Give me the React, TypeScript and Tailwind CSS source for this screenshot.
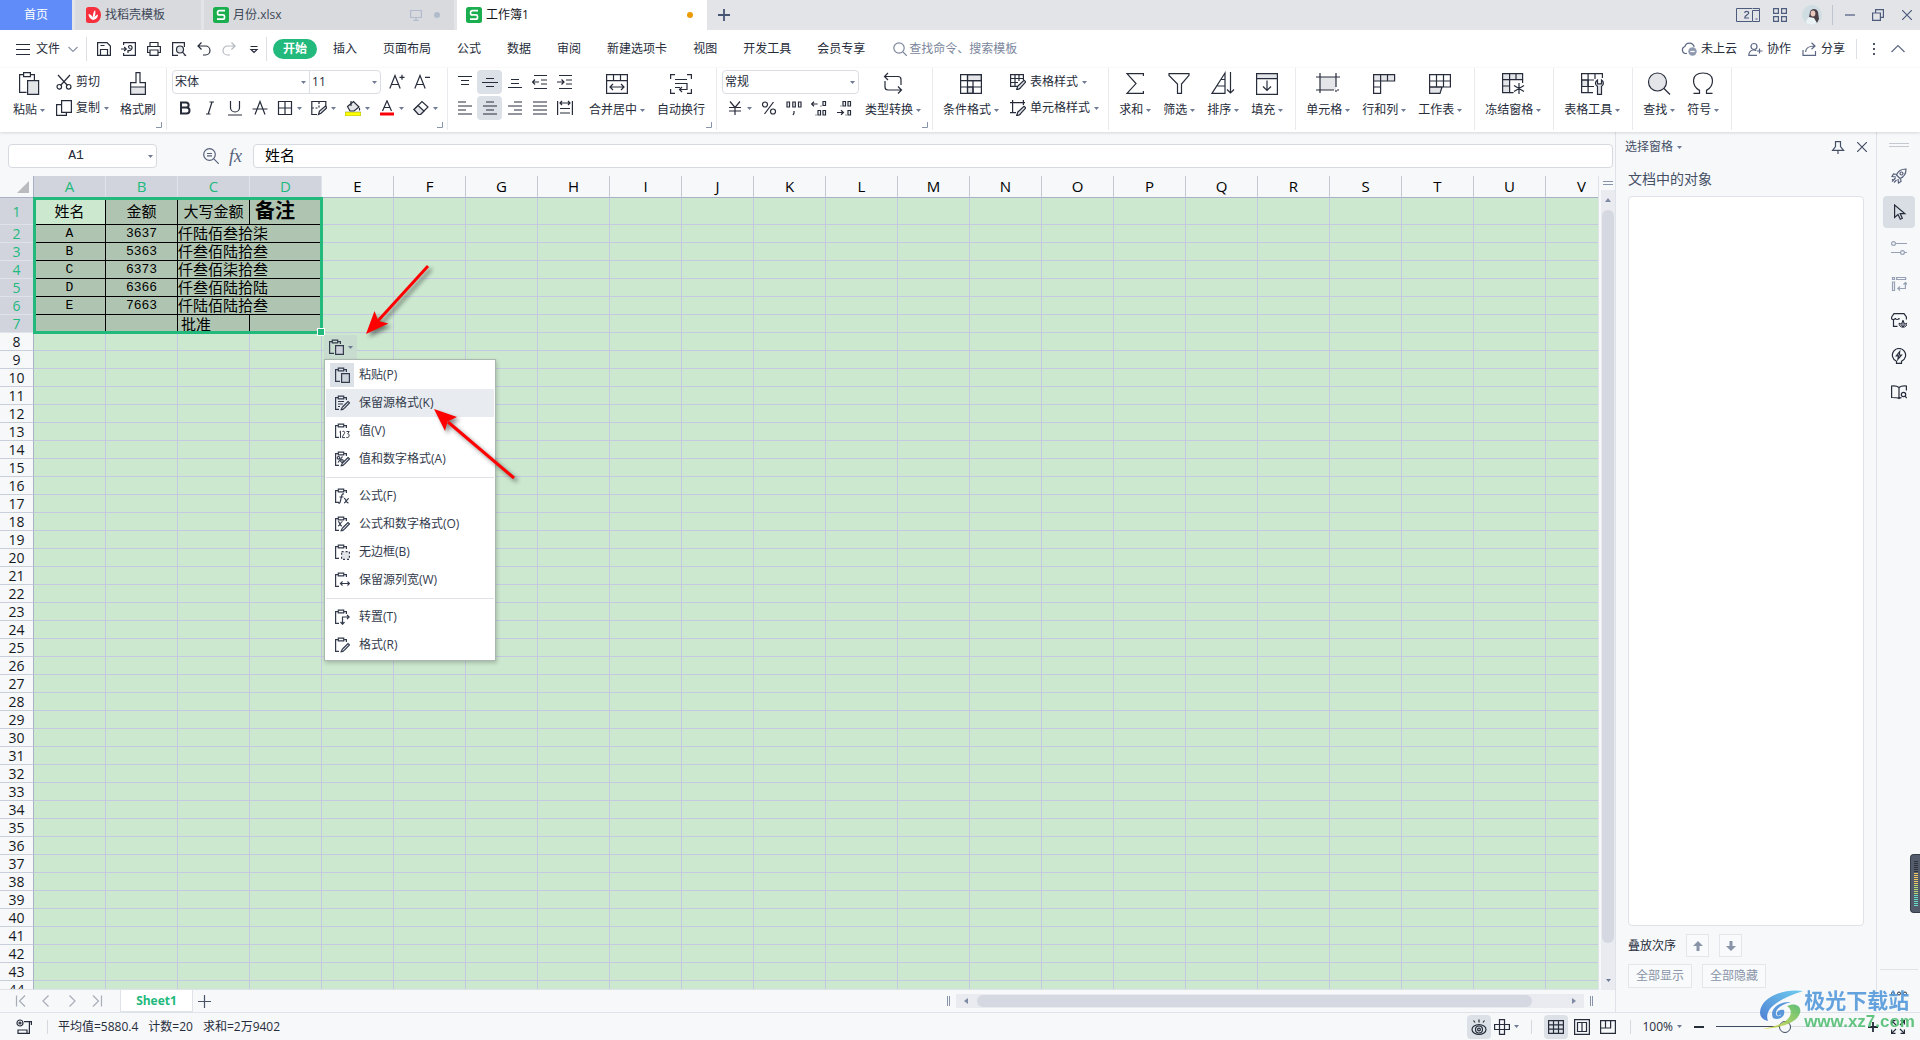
import type { ReactNode } from 'react';

const TABS = ['插入', '页面布局', '公式', '数据', '审阅', '新建选项卡', '视图', '开发工具', '会员专享'];
const COLUMNS = 'ABCDEFGHIJKLMNOPQRSTUV'.split('');
const ROWS = Array.from({ length: 44 }, (_, i) => i + 1);
const PEOPLE = [
    ['A', '3637', '仟陆佰叁拾柒'],
    ['B', '5363', '仟叁佰陆拾叁'],
    ['C', '6373', '仟叁佰柒拾叁'],
    ['D', '6366', '仟叁佰陆拾陆'],
    ['E', '7663', '仟陆佰陆拾叁'],
];

type IconProps = { size?: number; children: ReactNode; className?: string };

function Icon({ size = 16, children, className = '' }: IconProps) {
    return (
        <svg
            width={size}
            height={size}
            viewBox={`0 0 ${size} ${size}`}
            fill="none"
            stroke="currentColor"
            strokeWidth="1.2"
            className={`shrink-0 ${className}`}
            aria-hidden="true"
        >
            {children}
        </svg>
    );
}

function Caret() {
    return (
        <svg width="5" height="3" viewBox="0 0 5 3" className="shrink-0" aria-hidden="true">
            <path d="M0 0h5L2.500 3z" fill="#6f7b95" />
        </svg>
    );
}

function Launcher() {
    return (
        <svg width="6" height="6" viewBox="0 0 6 6" className="absolute right-1 bottom-0.5" aria-hidden="true">
            <path d="M5.5 0v5.5H0" fill="none" stroke="#8a94a8" />
        </svg>
    );
}

function Group({ children, className }: { children: ReactNode; className: string }) {
    return <div className={`relative flex h-[62px] shrink-0 border-r border-[#e8eaed] ${className}`}>{children}</div>;
}

function BigButton({ label, icon, caret = true }: { label: string; icon: ReactNode; caret?: boolean }) {
    return (
        <button type="button" className="flex shrink-0 flex-col items-center gap-[7px] pt-[3px] whitespace-nowrap">
            <Icon size={24}>{icon}</Icon>
            <span className="flex items-center gap-[3px] leading-4">
                {label}
                {caret && <Caret />}
            </span>
        </button>
    );
}

function SmallButton({ label, icon, caret = true }: { label: string; icon: ReactNode; caret?: boolean }) {
    return (
        <button type="button" className="flex h-6 items-center gap-1 whitespace-nowrap">
            <Icon>{icon}</Icon>
            {label}
            {caret && <Caret />}
        </button>
    );
}

function Tool({ name, children, active = false }: { name: string; children: ReactNode; active?: boolean }) {
    return (
        <button
            type="button"
            aria-label={name}
            className={`flex h-6 w-[25px] items-center justify-center rounded-sm ${active ? 'bg-[#dce1e7]' : ''}`}
        >
            <Icon>{children}</Icon>
        </button>
    );
}

function DropTool({ name, children }: { name: string; children: ReactNode }) {
    return (
        <button type="button" aria-label={name} className="flex h-6 w-[34px] items-center justify-center gap-1">
            <Icon>{children}</Icon>
            <Caret />
        </button>
    );
}

function Dropdown({ label, value, className }: { label: string; value: string; className: string }) {
    return (
        <div className={`relative h-6 border border-[#dadde3] bg-white ${className}`}>
            <select aria-label={label} className="h-full w-full appearance-none bg-transparent pl-0.5 outline-none">
                <option>{value}</option>
            </select>
            <span className="pointer-events-none absolute top-2.5 right-[3px] flex">
                <Caret />
            </span>
        </div>
    );
}

const wpsMark = (
    <svg width="16" height="16" viewBox="0 0 16 16" className="shrink-0" aria-hidden="true">
        <rect width="16" height="16" rx="2.5" fill="#1aae4f" />
        <path d="M12 3.7H6.2a1.6 1.6 0 0 0-1.6 1.6v.9c0 1 .7 1.7 1.6 1.7h3.7c.9 0 1.6.7 1.6 1.6v.9c0 1-.7 1.7-1.6 1.7H4" fill="none" stroke="#fff" strokeWidth="1.7" />
    </svg>
);

function TitleBar() {
    return (
        <header className="flex h-[30px] shrink-0 items-stretch bg-[#e2e4e8]">
            <button type="button" className="w-[72px] bg-[#608cfa] text-white">首页</button>
            <button type="button" className="ml-[3px] flex w-[126px] items-center gap-1 bg-[#d8dade] pl-[11px] text-[#3d4757]">
                <svg width="15" height="16" viewBox="0 0 15 16" aria-hidden="true">
                    <path d="M2.5 0H8a7 8 0 0 1 0 16H2.5A2.5 2.5 0 0 1 0 13.500V2.500A2.500 2.500 0 0 1 2.500 0z" fill="#f6303c" />
                    <path d="M7 13c-3-1-4.500-3.500-4.500-6C5 7.500 6.500 9 7 11c-.3-3 .2-6 2-8 1 2.500.3 5.500-1 8 .9-2 2.200-3 4-3.500C12 10.500 10 12.500 7 13z" fill="#fff" />
                </svg>
                找稻壳模板
            </button>
            <button type="button" className="ml-[3px] flex w-[250px] items-center gap-1 bg-[#d8dade] pl-[9px] text-[#3d4757]">
                {wpsMark}
                月份.xlsx
                <span className="ml-auto flex items-center gap-3 pr-3.5 text-[#b1bbcb]">
                    <Icon size={12}>
                        <path d="M.6 1.500h10.800v7H.6zM6 8.500v3M3.500 11.400h5" />
                    </Icon>
                    <span className="size-1.5 rounded-full bg-[#b1bbcb]" />
                </span>
            </button>
            <button type="button" className="ml-[3px] flex w-[250px] items-center gap-1 bg-white pl-[9px] text-[#15181d]">
                {wpsMark}
                工作簿1
                <span className="mr-3.5 ml-auto size-1.5 rounded-full bg-[#ec9a05]" />
            </button>
            <button type="button" aria-label="新建标签" className="flex w-[34px] items-center justify-center text-[#465373]">
                <Icon size={12}>
                    <path d="M6 0v12M0 6h12" strokeWidth="1.800" />
                </Icon>
            </button>
            <div className="ml-auto flex items-center text-[#4d5b7c]">
                <button type="button" aria-label="双屏" className="mr-[13px]">
                    <svg width="24" height="14" viewBox="0 0 24 14" fill="none" stroke="currentColor" aria-hidden="true">
                        <path d="M16 13.500H.5V.5H16M16.500 2.500h7v11h-7zM19.500 11h2M16.500.5h7v2" />
                        <path d="M8.700 5c0-2.200 4-2.200 4 0 0 1.500-4 2.500-4 5h4.300" strokeWidth="1.200" />
                    </svg>
                </button>
                <button type="button" aria-label="应用" className="mr-[15px]">
                    <Icon size={14}>
                        <path d="M.6.6h4.800v4.800H.6zM8.600.6h4.800v4.800H8.600zM.6 8.600h4.800v4.800H.6zM8.600 8.600h4.800v4.800H8.600z" />
                    </Icon>
                </button>
                <button type="button" aria-label="账户" className="mr-2.5">
                    <svg width="20" height="20" viewBox="0 0 20 20" aria-hidden="true">
                        <circle cx="10" cy="10" r="10" fill="#cfdde2" />
                        <path d="M4 18c0-4 3-6 6-7l4 1 1 6a10 10 0 0 1-11 0z" fill="#e9f2f5" />
                        <path d="M8 7c1-4 7-4 8 0l1 7-2 4-3-5-5-1z" fill="#4b4048" />
                        <ellipse cx="11" cy="8.500" rx="2.400" ry="3" fill="#e9c9bd" />
                    </svg>
                </button>
                <span className="mr-3 h-5 w-px bg-[#bfc4cf]" />
                <button type="button" aria-label="最小化" className="mr-[17px]">
                    <Icon size={10}>
                        <path d="M0 5h10" />
                    </Icon>
                </button>
                <button type="button" aria-label="还原" className="mr-[18px]">
                    <Icon size={12}>
                        <path d="M.6 4h7.800v7.400H.6zM3.600 4V.6h7.800v7.800h-3" />
                    </Icon>
                </button>
                <button type="button" aria-label="关闭" className="mr-2">
                    <Icon size={10}>
                        <path d="M0 0l10 10M10 0L0 10" />
                    </Icon>
                </button>
            </div>
        </header>
    );
}

function MenuBar() {
    return (
        <nav className="flex h-[38px] shrink-0 items-center bg-white pl-4">
            <button type="button" className="flex items-center gap-1.5">
                <Icon size={14}>
                    <path d="M0 2.500h14M0 7.500h14M0 12.500h14" strokeWidth="1" />
                </Icon>
                文件
                <Icon size={10} className="ml-0.5 text-[#8b95a7]">
                    <path d="M.5 3L5 7.500 9.500 3" />
                </Icon>
            </button>
            <span className="mr-1 ml-2 h-6 w-px bg-[#dcdfe4]" />
            <Tool name="保存">
                <path d="M1.600 1.600h9.400l3.400 3.400v9.400H1.600zM4.500 14.400V8.500h7v5.900M4.500 4.500h4" />
            </Tool>
            <Tool name="输出为PDF">
                <path d="M2.600 4V1.600h11.800v12.800H2.600V12M0 8h5M3.200 6l2 2-2 2M7 12V9.500c5 .6 5-5 2-5-2 0-2 3 .5 3" />
            </Tool>
            <Tool name="打印">
                <path d="M4 5.500v-4h8v4M4 11.500H1.600v-6h12.800v6H12M4 9h8v5.400H4z" />
            </Tool>
            <Tool name="打印预览">
                <path d="M7 14.400H1.600V1.600h11.800V6M13.400 13.400v1" />
                <circle cx="9" cy="8.500" r="3.500" fill="#e3e5e9" />
                <path d="M11.500 11.200l3.500 3.600" />
            </Tool>
            <Tool name="撤销">
                <path d="M5.500 1.500L2 5l3.500 3.500M2 5h7.500a4.500 4.500 0 0 1 0 9H7" />
            </Tool>
            <button type="button" aria-label="恢复" className="flex h-6 w-[25px] items-center justify-center text-[#b4b8bf]">
                <Icon>
                    <path d="M10.500 1.500L14 5l-3.500 3.500M14 5H6.500a4.500 4.500 0 0 0 0 9H9" />
                </Icon>
            </button>
            <Tool name="自定义快速访问工具栏">
                <path d="M4.500 5.500h7M5 8.500l3 3 3-3z" />
            </Tool>
            <span className="mr-1.5 h-6 w-px bg-[#dcdfe4]" />
            <div className="flex shrink-0 items-center gap-1.5 whitespace-nowrap">
                <button type="button" className="h-5 rounded-full bg-[#22b97d] px-2.5 font-bold text-white">开始</button>
                {TABS.map((tab) => (
                    <button key={tab} type="button" className="px-2.5">
                        {tab}
                    </button>
                ))}
            </div>
            <label className="ml-[18px] flex items-center gap-0.5 text-[#7b869c]">
                <Icon size={14}>
                    <circle cx="6" cy="6" r="5.200" />
                    <path d="M10 10l4 4" />
                </Icon>
                <input placeholder="查找命令、搜索模板" aria-label="搜索" className="w-[120px] outline-none placeholder:text-[#7b869c]" />
            </label>
            <div className="ml-auto flex shrink-0 items-center gap-[11px] pr-[15px] whitespace-nowrap">
                <button type="button" className="flex items-center gap-1">
                    <Icon className="text-[#5c6883]">
                        <path d="M6 12.500H4.500a3.600 3.600 0 0 1-.6-7C5 1 12 .8 13.200 6" />
                        <circle cx="11.500" cy="10.500" r="4.200" fill="#8f9ab1" stroke="none" />
                        <path d="M9.300 10.500h4.400" stroke="#fff" />
                    </Icon>
                    未上云
                </button>
                <button type="button" className="flex items-center gap-1">
                    <Icon size={15} className="text-[#5c6883]">
                        <circle cx="6" cy="4.500" r="3" />
                        <path d="M9 13.400H.8c0-3.500 2-5.400 5-5.400 1 0 2 .3 2.500.7M11.500 6.500v5M9 9h5.500" />
                    </Icon>
                    协作
                </button>
                <button type="button" className="flex items-center gap-1">
                    <Icon size={15} className="text-[#5c6883]">
                        <path d="M1 8v5.400h12.500V9M3.500 10c.3-4 3-6 9-6M9.500.8L13 4 9.500 7.200" />
                    </Icon>
                    分享
                </button>
                <span className="h-5 w-px bg-[#dcdfe4]" />
                <button type="button" aria-label="更多" className="flex w-3 flex-col items-center gap-[3px]">
                    <span className="size-0.5 bg-[#4d5669]" />
                    <span className="size-0.5 bg-[#4d5669]" />
                    <span className="size-0.5 bg-[#4d5669]" />
                </button>
                <button type="button" aria-label="折叠功能区">
                    <Icon size={14} className="text-[#5c6883]">
                        <path d="M.5 10L7 3.500l6.500 6.500" />
                    </Icon>
                </button>
            </div>
        </nav>
    );
}

function Ribbon() {
    return (
        <div className="relative z-10 flex h-16 shrink-0 overflow-hidden bg-white shadow-[0_1px_3px_#00000022]">
            <Group className="gap-[11px] pr-2.5 pl-[13px]">
                <BigButton
                    label="粘贴"
                    icon={
                        <>
                            <path d="M7 3.600H2.600v17.800h7M13 3.600h4.400V9M6.600 1.600h6.800v4H6.600z" />
                            <path d="M10.600 9.600h11v13.800h-11z" fill="#e3e5e9" />
                        </>
                    }
                />
                <div className="flex flex-col gap-0.5 pt-0.5">
                    <SmallButton
                        label="剪切"
                        caret={false}
                        icon={
                            <>
                                <path d="M2 1l9.500 10.500M14 1L4.500 11.500" />
                                <circle cx="3.300" cy="12.800" r="2.300" />
                                <circle cx="12.700" cy="12.800" r="2.300" />
                            </>
                        }
                    />
                    <SmallButton label="复制" icon={<path d="M5.600.6h9.800v11.800H5.600zM5.600 4.600h-5v10.800h9.800v-3" />} />
                </div>
                <BigButton
                    label="格式刷"
                    caret={false}
                    icon={
                        <>
                            <path d="M4.600 16h14.800v7.400H4.600z" fill="#e3e5e9" />
                            <path d="M4.600 16v-4.400H10V1.600h4v10h5.400V16" />
                        </>
                    }
                />
                <Launcher />
            </Group>

            <Group className="flex-col gap-0.5 px-[5px] pt-0.5">
                <div className="flex">
                    <Dropdown label="字体" value="宋体" className="w-[138px] rounded-l-sm" />
                    <Dropdown label="字号" value="11" className="-ml-px w-[72px] rounded-r-sm" />
                    <span className="ml-[3px] flex">
                        <Tool name="增大字号">
                            <path d="M.8 14.500L6 1.500l5.200 13M2.600 10.500h6.800M13 .8v5M10.500 3.300h5" />
                        </Tool>
                        <Tool name="减小字号">
                            <path d="M.8 14.500L6 1.500l5.200 13M2.600 10.500h6.800M11 3.300h5" />
                        </Tool>
                    </span>
                </div>
                <div className="flex">
                    <Tool name="加粗">
                        <path d="M4 2.500h5c3.500 0 3.500 5 0 5H4zM4 7.500h5.500c4 0 4 6 0 6H4z" strokeWidth="2" />
                    </Tool>
                    <Tool name="倾斜">
                        <path d="M7.500 2H12M4 14h4.500M10 2L6.200 14" />
                    </Tool>
                    <Tool name="下划线">
                        <path d="M3.500 1v6.500a4.500 4.500 0 0 0 9 0V1M1 15h14" />
                    </Tool>
                    <Tool name="删除线">
                        <path d="M3 14.500l5-13 5 13M.5 9h15" />
                    </Tool>
                    <DropTool name="边框">
                        <path d="M1.500 1.500h13v13h-13zM8 1.500v13M1.500 8h13" />
                    </DropTool>
                    <DropTool name="绘图边框">
                        <path d="M6 14.500H.8V1.500h14V6" />
                        <path d="M1 8h7M8 2v6" strokeDasharray="2 1.500" />
                        <path d="M7.500 14.500l1-3.500 6-5 1.500 1.800-6 5.500z" fill="#e3e5e9" />
                    </DropTool>
                    <DropTool name="填充颜色">
                        <path d="M2.500 6.500l6-5 5.500 5.500-5 4H5z" fill="#e3e5e9" />
                        <path d="M6 1v5M14.500 8v2.500" />
                        <path d="M0 12h16v4H0z" fill="#ffff00" stroke="#77803c" strokeWidth=".5" />
                    </DropTool>
                    <DropTool name="字体颜色">
                        <path d="M3.500 11L8 .8 12.500 11M5 7.500h6" />
                        <path d="M1 12.500h14v3H1z" fill="#fb0007" stroke="none" />
                    </DropTool>
                    <DropTool name="清除">
                        <path d="M1 9.500l8-8 6 5.500-7.500 7.500H5.500z" />
                        <path d="M5 5.500l6 5.500-3.500 3.500h-2L1 9.500z" fill="#e3e5e9" />
                    </DropTool>
                </div>
                <Launcher />
            </Group>

            <Group className="gap-3 pr-[11px] pl-1">
                <div className="grid grid-cols-5 content-start gap-y-0.5 pt-0.5">
                    <Tool name="顶端对齐">
                        <path d="M1 2.500h14M4 6.500h8M4 10.500h8" />
                    </Tool>
                    <Tool name="垂直居中" active>
                        <path d="M4 4.500h8M0 8.500h16M4 12.500h8" />
                    </Tool>
                    <Tool name="底端对齐">
                        <path d="M4 5.500h8M4 9.500h8M1 13.500h14" />
                    </Tool>
                    <Tool name="减少缩进">
                        <path d="M2 1.500h13M9 6h6M9 10h6M2 14.500h13M0 8h7M3 5.500L.6 8 3 10.500" />
                    </Tool>
                    <Tool name="增加缩进">
                        <path d="M2 1.500h13M9 6h6M9 10h6M2 14.500h13M0 8h7M4.500 5.500L7 8l-2.500 2.500" />
                    </Tool>
                    <Tool name="左对齐">
                        <path d="M1 2h8M1 6h14M1 10h8M1 14h14" />
                    </Tool>
                    <Tool name="水平居中" active>
                        <path d="M4 2h8M1 6h14M4 10h8M1 14h14" />
                    </Tool>
                    <Tool name="右对齐">
                        <path d="M7 2h8M1 6h14M7 10h8M1 14h14" />
                    </Tool>
                    <Tool name="两端对齐">
                        <path d="M1 2h14M1 6h14M1 10h14M1 14h14" />
                    </Tool>
                    <Tool name="分散对齐">
                        <path d="M.6 1v14M15.400 1v14M3 3h10M5 1L3 3l2 2M11 1l2 2-2 2M3 8.500h10M3 13h10" />
                    </Tool>
                </div>
                <BigButton
                    label="合并居中"
                    icon={<path d="M1.600 3.600h20.800v18.800H1.600zM1.600 9.600h20.800M8.500 3.600v6M15.500 3.600v6M5 16h14M8 13l-3 3 3 3M16 13l3 3-3 3" />}
                />
                <BigButton
                    label="自动换行"
                    caret={false}
                    icon={<path d="M6 3.600H1.600V8M18 3.600h4.400V8M6 22.400H1.600V18M18 22.400h4.400V18M6 8.500h12M6 12.500h12v6h-7M6 16.500h5M13 16l-2.500 2.500L13 21" />}
                />
                <Launcher />
            </Group>

            <Group className="gap-1.5 pr-[11px] pl-[5px]">
                <div className="flex flex-col gap-0.5 pt-0.5">
                    <Dropdown label="数字格式" value="常规" className="w-[137px] rounded-sm" />
                    <div className="flex">
                        <DropTool name="货币">
                            <path d="M3 1.500l5 6 5-6M8 7.500v7.500M2 7.500h12M2 11h12" />
                        </DropTool>
                        <Tool name="百分比">
                            <circle cx="4" cy="4.500" r="2.500" />
                            <circle cx="12" cy="11.500" r="2.500" />
                            <path d="M12.500 2l-9 12" />
                        </Tool>
                        <Tool name="千位分隔">
                            <path d="M1 2h2.500v5H1zM6.800 2h2.500v5H6.800zM12.500 2H15v5h-2.500zM8 11v2l-1 2" />
                        </Tool>
                        <Tool name="增加小数位">
                            <path d="M.6 4h6M3 1.800L.6 4 3 6.200M12 1.500h2.500v4H12zM7 10.500h2.500v4.500H7zM12 10.500h2.500v4.500H12zM9.500 6h1M4.500 15h1" />
                        </Tool>
                        <Tool name="减少小数位">
                            <path d="M1 12.500h6M5 10.300l2.400 2.200L5 14.700M7 1.500h2.500v4.500H7zM12 1.500h2.500v4.500H12zM12 10.500h2.500v4.500H12zM4.500 6h1M9.500 15h1" />
                        </Tool>
                    </div>
                </div>
                <BigButton
                    label="类型转换"
                    icon={<path d="M7 2L3.500 5.500 7 9M3.500 5.500H17a3 3 0 0 1 3 3V14M4 10v6a3 3 0 0 0 3 3h13M17 15.500l3.500 3.500-3.500 3.500" />}
                />
                <Launcher />
            </Group>

            <Group className="gap-[11px] pr-[9px] pl-2.5">
                <BigButton
                    label="条件格式"
                    icon={
                        <>
                            <path d="M8.500 3.600h13.900v6H8.500zM8.500 16h5.500v6.400H8.500z" fill="#e3e5e9" />
                            <path d="M1.600 3.600h20.800v18.800H1.600zM1.600 9.600h20.800M1.600 16h20.800M8.500 3.600v18.800M14 9.600v12.800" />
                        </>
                    }
                />
                <div className="flex flex-col gap-0.5 pt-0.5">
                    <SmallButton
                        label="表格样式"
                        icon={
                            <>
                                <path d="M7 12.400H.6V.6h12.800V6M.6 4.500h12.800M.6 8.500H8M5 .6v11.800M9 .6V7" />
                                <path d="M6 15.400c2 0 .5-3 2.500-4l5.500-5 1.800 1.500-5 5.500c-1 2-3 2-4.800 2z" fill="#e3e5e9" />
                            </>
                        }
                    />
                    <SmallButton
                        label="单元格样式"
                        icon={
                            <>
                                <path d="M0 2.600h15M2.600 0v13M0 12.600h6M13.400 0v5" />
                                <path d="M6 15.400c2 0 .5-3 2.500-4l5.500-5 1.800 1.500-5 5.500c-1 2-3 2-4.800 2z" fill="#e3e5e9" />
                            </>
                        }
                    />
                </div>
            </Group>

            <Group className="gap-3 pr-3 pl-2.5">
                <BigButton label="求和" icon={<path d="M20.400 5V2.600H4l9 10-9 9.800h16.400V20" />} />
                <BigButton label="筛选" icon={<path d="M2 2.600h20v1.800L14.500 13v9.400h-4V13L2 4.400z" />} />
                <BigButton label="排序" icon={<path d="M14 2L1 22.400h13zM6.500 15H14M10 8.500h4M19.500 1v21M16 18.500l3.500 3.500 3.500-3.500" />} />
                <BigButton
                    label="填充"
                    icon={
                        <>
                            <path d="M1.600 2.600h20.800v5H1.600z" fill="#e3e5e9" />
                            <path d="M1.600 7.600v15.800h20.800V7.600M12 9.500V19M8 15.500l4 4 4-4" />
                        </>
                    }
                />
            </Group>

            <Group className="gap-3 pr-3 pl-2.5">
                <BigButton
                    label="单元格"
                    icon={
                        <>
                            <path d="M4 6h16v13H4z" fill="#e3e5e9" stroke="none" />
                            <path d="M0 6h24M0 19h18M4 2v20M20 2v14M20 19v2M21 19h2" />
                        </>
                    }
                />
                <BigButton
                    label="行和列"
                    icon={
                        <>
                            <path d="M1.600 3.600h21v6.400h-21z" fill="#e3e5e9" />
                            <path d="M1.600 10v12.400h7V3.600M1.600 16h7M15.500 3.600V10" />
                        </>
                    }
                />
                <BigButton
                    label="工作表"
                    icon={
                        <>
                            <path d="M1.600 16H14l-2 6.400H1.600z" fill="#e3e5e9" />
                            <path d="M1.600 16V3.600h20.800V16zM1.600 10h20.800M8.500 3.600V16M15.500 3.600V16" />
                        </>
                    }
                />
            </Group>

            <Group className="pr-3 pl-2.5">
                <BigButton
                    label="冻结窗格"
                    icon={
                        <>
                            <path d="M1.600 2.600h20v6h-13v13h-7z" fill="#e3e5e9" />
                            <path d="M1.600 8.600h7V2.600M1.600 15h7M15 2.600v6M21.600 8.600V12M8.600 21.600h4M18 12v11M13 14.500l10 6M23 14.500l-10 6" />
                        </>
                    }
                />
            </Group>
            <Group className="pr-3 pl-2.5">
                <BigButton
                    label="表格工具"
                    icon={
                        <>
                            <path d="M1.600 9h6.500v6.500H1.600z" fill="#e3e5e9" />
                            <path d="M13 21.600H1.600v-19h20.800V7M1.600 9H14M1.600 15.500H14M8.100 2.600v19M15 2.600V8" />
                            <path d="M17.500 23.400v-8c-3-1.500-2.500-5 0-6.500v4h4v-4c2.500 1.500 2.500 5 0 6.500v8z" fill="#e3e5e9" />
                        </>
                    }
                />
            </Group>
            <Group className="gap-3 pr-3 pl-2.5">
                <BigButton
                    label="查找"
                    icon={
                        <>
                            <circle cx="10.500" cy="11" r="9" fill="#e3e5e9" />
                            <path d="M17 17.500l6 6" />
                        </>
                    }
                />
                <BigButton label="符号" icon={<path d="M2.500 22.400h6v-3C.500 15-.500 2 12 2s11.500 13 3.500 17.400v3h6" />} />
            </Group>
        </div>
    );
}

function FormulaBar() {
    return (
        <div className="flex h-11 shrink-0 items-center pt-[3px] pr-0.5 pl-2">
            <div className="relative h-6 w-[149px] rounded-sm border border-[#d6d9df] bg-white">
                <input
                    aria-label="名称框"
                    defaultValue="A1"
                    className="h-full w-[134px] text-center font-['Liberation_Mono',monospace] text-[13px] outline-none"
                />
                <span className="absolute top-2.5 right-[3px] flex">
                    <Caret />
                </span>
            </div>
            <button type="button" aria-label="缩小" className="ml-[46px] text-[#56607a]">
                <Icon>
                    <circle cx="6.500" cy="6.500" r="5.800" />
                    <path d="M10.800 10.800l5 5M4 5.500h5M4 7.800h5" />
                </Icon>
            </button>
            <button type="button" className="ml-2.5 w-6 text-left font-['Liberation_Serif',serif] text-lg leading-5 text-[#56607a] italic">
                fx
            </button>
            <input
                aria-label="编辑栏"
                defaultValue="姓名"
                className="h-6 min-w-0 flex-1 rounded-sm border border-[#d6d9df] bg-white px-[11px] pb-0.5 text-[15px] text-black outline-none"
            />
        </div>
    );
}

const MARK = 'border-black bg-[#afc5b1]';
const LINE = 'border-[#c5c9df]';

function GridRow({ n }: { n: number }) {
    const picked = n <= 7;
    const person = PEOPLE[n - 2];
    let cells: ReactNode = null;
    if (n === 1) {
        cells = (
            <>
                <td className="border-r border-b border-black text-center">姓名</td>
                <td className={`border-r border-b text-center ${MARK}`}>金额</td>
                <td className={`border-r border-b text-center ${MARK}`}>大写金额</td>
                <td className={`border-r border-b pl-[5px] text-xl leading-[26px] font-bold ${MARK}`}>备注</td>
            </>
        );
    } else if (person) {
        cells = (
            <>
                <td className={`border-r border-b text-center font-['Liberation_Mono',monospace] text-[13px] ${MARK}`}>{person[0]}</td>
                <td className={`border-r border-b text-center font-['Liberation_Mono',monospace] text-[13px] ${MARK}`}>{person[1]}</td>
                <td colSpan={2} className={`border-r border-b ${MARK}`}>{person[2]}</td>
            </>
        );
    } else if (n === 7) {
        cells = (
            <>
                <td className={`border-r ${MARK}`} />
                <td className={`border-r ${MARK}`} />
                <td className={`border-r pl-[3px] ${MARK}`}>批准</td>
                <td className={`border-r ${MARK}`} />
            </>
        );
    }
    return (
        <tr className={n === 1 ? 'h-[27px]' : 'h-[18px]'}>
            <th
                scope="row"
                className={`border-r border-b border-r-[#a9b1c6] p-0 font-['Open_Sans',sans-serif] text-sm leading-[17px] font-normal ${
                    picked ? 'border-b-[#dfe2e9] bg-[#d1d4dd] text-[#22b97d]' : 'border-b-[#c9cedb] bg-[#f6f8fa] text-[#15181d]'
                }`}
            >
                {n}
            </th>
            {cells}
            {(picked ? COLUMNS.slice(4) : COLUMNS).map((c) => (
                <td key={c} className={`border-r border-b ${LINE}`} />
            ))}
        </tr>
    );
}

const clip = <path d="M4 2.600H1.600v11.800H5M10 2.600h2.400V5M4.300 1.200h5.400v2.600H4.300z" />;
const brush = <path d="M6.500 15c1.500 0 1-2.500 2.500-3.500L14 6.500l1.500 1.400-5 5.100c-1 1.600-2.500 2-4 2z" fill="#e3e5e9" />;

const PASTE_MENU: { label: string; icon: ReactNode; group?: boolean }[] = [
    { label: '粘贴(P)', icon: <><path d="M4 2.600H1.600v11.800H6M10 2.600h2.400V5M4.300 1.200h5.400v2.600H4.300z" /><path d="M7.600 6.600h7.800v8.800H7.600z" fill="#cdd2da" /></> },
    { label: '保留源格式(K)', icon: <>{clip}<path d="M4 6.500h6M4 9h5M4 11.500h2" />{brush}</> },
    { label: '值(V)', icon: <>{clip}<path d="M5.500 9l1-.8V15M8.300 9c.5-1.200 2.600-.9 2.400.6-.2 1.500-2.300 3-2.400 5h2.700M12.500 8.500h2.700l-1.500 2.400c2.500.2 1.800 4.500-1.400 3.500" strokeWidth="1" /></> },
    { label: '值和数字格式(A)', icon: <>{clip}<circle cx="4.500" cy="6.800" r="1.300" /><circle cx="8" cy="10" r="1.300" /><path d="M8.500 5.500L4 11.500" />{brush}</> },
    { label: '公式(F)', icon: <>{clip}<path d="M4.500 15.500c2 0 2-2 2.500-5s1-5 3-4.500M5.500 9h4M10 10.500c2-.5 1.500 4.500 4.500 4.300M15 10.500c-2 0-3 4.500-5 4.300" /></>, group: true },
    { label: '公式和数字格式(O)', icon: <>{clip}<path d="M4 5.500c2 0 1.500 4.500 4 4.500M8.500 5.500c-2 0-2.500 4.500-4.500 4.500" />{brush}</> },
    { label: '无边框(B)', icon: <>{clip}<path d="M7.600 7.600h7.800v7.800H7.600z" fill="#e3e5e9" strokeDasharray="2 2" /></> },
    { label: '保留源列宽(W)', icon: <>{clip}<path d="M6.500 11.500h9M8.500 9.500l-2 2 2 2M13.500 9.500l2 2-2 2" /></> },
    { label: '转置(T)', icon: <>{clip}<path d="M8.500 15V8h6.500M13 6l2.200 2L13 10M6.500 13l2 2.200 2-2.200" /></>, group: true },
    { label: '格式(R)', icon: <>{clip}{brush}</> },
];

function PastePopup() {
    return (
        <div className="absolute top-[159px] left-[324px] z-10 text-[#333b4d]">
            <button type="button" aria-label="粘贴选项" className="flex h-6 w-[33px] items-center justify-center gap-1 bg-[#c9dcd0]">
                <Icon>{PASTE_MENU[0].icon}</Icon>
                <Caret />
            </button>
            <ul role="menu" className="w-[172px] border border-[#a9b8ae] bg-white p-px whitespace-nowrap shadow-[1px_2px_4px_#00000033]">
                {PASTE_MENU.map((item, i) => (
                    <li key={item.label} role="none" className={item.group ? 'mt-1 border-t border-[#dfe2e6] pt-1' : ''}>
                        <button
                            type="button"
                            role="menuitem"
                            className={`flex h-7 w-full items-center gap-[5px] pl-1 ${i === 1 ? 'bg-[#e8ebf0]' : ''}`}
                        >
                            <span className={`flex size-6 items-center justify-center ${i === 0 ? 'bg-[#dce1e7]' : ''}`}>
                                <Icon>{item.icon}</Icon>
                            </span>
                            {item.label}
                        </button>
                    </li>
                ))}
            </ul>
        </div>
    );
}

function Grid() {
    return (
        <div className="relative min-h-0 min-w-0 flex-1 overflow-hidden border-b border-[#dfe2e8] bg-[#cce8cf]">
            <table className="w-0 table-fixed border-separate border-spacing-0 text-[15px] leading-[17px] whitespace-nowrap text-black [&_td]:h-[inherit] [&_td]:py-0">
                <colgroup>
                    <col className="w-[34px]" />
                    {COLUMNS.map((c) => (
                        <col key={c} className="w-[72px]" />
                    ))}
                </colgroup>
                <thead>
                    <tr className="h-[22px] bg-[#f6f8fa]">
                        <td className="border-r border-b border-[#a9b1c6]">
                            <svg width="12" height="12" viewBox="0 0 12 12" className="mr-1 ml-auto" aria-hidden="true">
                                <path d="M12 0v12H0z" fill="#b9bbbf" />
                            </svg>
                        </td>
                        {COLUMNS.map((c, i) => (
                            <th
                                key={c}
                                scope="col"
                                className={`border-r border-b border-b-[#a9b1c6] p-0 font-normal ${
                                    i < 4 ? 'border-r-[#dfe2e9] bg-[#d1d4dd] text-[#22b97d]' : 'border-r-[#c2c7d3]'
                                }`}
                            >
                                {c}
                            </th>
                        ))}
                    </tr>
                </thead>
                <tbody>
                    {ROWS.map((n) => (
                        <GridRow key={n} n={n} />
                    ))}
                </tbody>
            </table>
            <div className="pointer-events-none absolute top-[21px] left-[33px] h-[137px] w-[290px] border-3 border-[#22b97d]">
                <span className="absolute -right-1 -bottom-1 size-1.5 bg-[#22b97d] outline outline-white" />
            </div>
            <PastePopup />
            <svg
                width="170"
                height="240"
                viewBox="0 0 170 240"
                className="pointer-events-none absolute top-[84px] left-[360px] z-20 overflow-visible drop-shadow-[3px_3px_2px_#00000077]"
                aria-hidden="true"
            >
                <path d="M68 6L16 63M154 218L88 162" stroke="#fe0000" strokeWidth="3" />
                <path d="M6 74l8.500-23 4 10 10 2.500zM74 149l23 8-9.500 4.500L85 171z" fill="#fe0000" />
            </svg>
        </div>
    );
}

function VerticalScroll() {
    return (
        <div className="flex w-[17px] shrink-0 flex-col items-center border-l border-[#dfe2e8] pl-0.5">
            <span className="mt-[5px] mb-[5px] h-1 w-2.5 border-y border-[#8a94a8]" />
            <div className="flex w-full flex-1 flex-col items-center bg-[#e9ebf0]">
                <svg width="6" height="4" viewBox="0 0 6 4" className="my-2 shrink-0" aria-hidden="true">
                    <path d="M0 4h6L3 0z" fill="#7f8aa3" />
                </svg>
                <span className="w-3 flex-1 rounded-full bg-[#d5d8e0]" />
                <span className="flex pt-9 pb-2">
                    <Caret />
                </span>
            </div>
        </div>
    );
}

function SheetBar() {
    return (
        <div className="flex h-[22px] shrink-0 items-center">
            <div className="flex w-[120px] items-center gap-3 pl-[13px] text-[#a8adb8]">
                <Icon size={14}><path d="M3.500 1.500v11M12 1.500L6.500 7l5.500 5.500" /></Icon>
                <Icon size={14}><path d="M9.500 1.500L4 7l5.500 5.500" /></Icon>
                <Icon size={14}><path d="M4.500 1.500L10 7l-5.500 5.500" /></Icon>
                <Icon size={14}><path d="M2 1.500L7.500 7 2 12.500M10.500 1.500v11" /></Icon>
            </div>
            <button type="button" className="h-full w-[73px] border-x border-b border-[#dfe2e8] bg-white font-bold text-[#22b97d]">Sheet1</button>
            <button type="button" aria-label="新建工作表" className="ml-[5px] text-[#4a5468]">
                <Icon size={13}><path d="M6.500 0v13M0 6.500h13" /></Icon>
            </button>
            <div className="ml-auto flex w-[668px] items-center gap-1.5 pr-[22px]">
                <span className="h-2.5 w-[3px] shrink-0 border-x border-[#8a94a8]" />
                <div className="flex h-3.5 flex-1 items-center bg-[#e9ebf0] px-2">
                    <svg width="4" height="6" viewBox="0 0 4 6" aria-hidden="true"><path d="M4 0v6L0 3z" fill="#7f8aa3" /></svg>
                    <span className="mr-10 ml-[9px] h-3 flex-1 rounded-full bg-[#d5d8e0]" />
                    <svg width="4" height="6" viewBox="0 0 4 6" aria-hidden="true"><path d="M0 0v6l4-3z" fill="#7f8aa3" /></svg>
                </div>
                <span className="h-2.5 w-[3px] shrink-0 border-x border-[#8a94a8]" />
            </div>
        </div>
    );
}

function SelectionPane() {
    const box = 'flex items-center justify-center border border-[#e3e6ea] bg-[#f9fafb] text-[#8994a8]';
    return (
        <aside className="flex w-[261px] shrink-0 flex-col border-l border-[#dfe2e8] pr-3 pl-3 text-[#454f66]">
            <div className="-ml-[3px] flex h-[30px] shrink-0 items-center">
                <button type="button" className="flex items-center gap-1">
                    选择窗格
                    <Caret />
                </button>
                <button type="button" aria-label="固定" className="ml-auto">
                    <Icon size={14}><path d="M4 1.600h6M4.500 1.600v5L1.600 10.400h11L9.500 6.600v-5M7 10.400V14" /></Icon>
                </button>
                <button type="button" aria-label="关闭窗格" className="mr-[-3px] ml-3">
                    <Icon size={10}><path d="M0 0l10 10M10 0L0 10" /></Icon>
                </button>
            </div>
            <h2 className="flex h-[34px] shrink-0 items-center text-sm">文档中的对象</h2>
            <ul aria-label="对象列表" className="flex-1 rounded-sm border border-[#dfe2e6] bg-white" />
            <div className="mt-2 flex items-center gap-2.5 text-[#262c3a]">
                叠放次序
                <button type="button" aria-label="上移一层" className={`size-[23px] ${box}`}>
                    <Icon size={10}><path d="M5 0l5 5H6.500v5h-3V5H0z" fill="currentColor" stroke="none" /></Icon>
                </button>
                <button type="button" aria-label="下移一层" className={`size-[23px] ${box}`}>
                    <Icon size={10}><path d="M5 10l5-5H6.500V0h-3v5H0z" fill="currentColor" stroke="none" /></Icon>
                </button>
            </div>
            <div className="mt-[7px] mb-6 flex gap-2.5">
                <button type="button" className={`h-6 w-16 ${box}`}>全部显示</button>
                <button type="button" className={`h-6 w-16 ${box}`}>全部隐藏</button>
            </div>
        </aside>
    );
}

function SideButton({ name, children, tone = '', active = false }: { name: string; children: ReactNode; tone?: string; active?: boolean }) {
    return (
        <button type="button" aria-label={name} className={`flex size-8 items-center justify-center rounded-sm ${tone} ${active ? 'bg-[#d9dee5]' : ''}`}>
            <Icon>{children}</Icon>
        </button>
    );
}

function SideBar() {
    return (
        <aside className="flex w-11 shrink-0 flex-col items-center gap-1 border-l border-[#dfe2e8]">
            <span className="mt-[11px] mb-[9px] h-1 w-5 shrink-0 border-y border-[#c3c8d1]" />
            <SideButton name="快捷" tone="text-[#56607a]">
                <path d="M15 1c-5 0-8 2-9.500 6l3.500 3.500C13 9 15 6 15 1zM6 6.500L2.500 6 1 8.500l4 .5M9.500 10l.5 3.500L7.500 15 7 11M4.500 10L1 13.500M5.500 12L3 14.500M1.500 11v1" />
                <circle cx="10.500" cy="5.500" r="1.500" />
            </SideButton>
            <SideButton name="选择" active>
                <path d="M3.600 1v12.500L7 10.500l2.300 4.700 2-1L9.200 9.600h4.600z" />
            </SideButton>
            <SideButton name="属性" tone="text-[#98a1b3]">
                <circle cx="2.500" cy="3.500" r="1.900" />
                <circle cx="11.500" cy="12.500" r="1.900" />
                <path d="M4.500 3.500H16M0 12.500h9.500M13.500 12.500H16" />
            </SideButton>
            <SideButton name="样式" tone="text-[#98a1b3]">
                <path d="M1.500 1.500h2v2h-2zM5.600 1.500h9v2h-9zM1.500 6h2v8.500h-2zM7 12.500h7.400V6.500M9 10.500l-2.200 2L9 14.700M12.500 8.500l1.900-2 1.900 2" />
            </SideButton>
            <SideButton name="稻壳">
                <path d="M2.500 7.500v6.900h4M.6 5L3 1.600h10L15.400 5v2.500M.6 5v1.500c0 1.500 3.400 1.500 3.700-.500 0 2 3.700 2 3.700 0M8 6v1.500" />
                <path d="M12 15.200c-2.500 0-4-1.700-4-4l2.400 1L12 8.200l1.600 4 2.400-1c0 2.300-1.500 4-4 4zM12 9v6M10 12.500l2 2.500 2-2.500" strokeWidth="1" />
            </SideButton>
            <SideButton name="智能">
                <path d="M5.500 13.200v2.200h5v-2.200a6.600 6.600 0 1 0-5 0z" />
                <path d="M8.700 3.500L5.300 7.800h2.200l-.6 3.400 3.600-4.200H8.300z" />
            </SideButton>
            <SideButton name="学习">
                <path d="M8 3.500v11M8 3.500c-2-1.700-5-1.700-7.400-1.500v11.500c3 0 5.500 0 7.400 1 1-.5 1.500-.7 2.500-.8M8 3.500c2-1.700 5-1.700 7.400-1.500v4.500" />
                <circle cx="12.500" cy="10.500" r="2.200" />
                <path d="M14 12.200l1.800 2" />
            </SideButton>
            <span className="mt-auto h-px w-[38px] shrink-0 bg-[#dfe2e6]" />
            <button type="button" aria-label="更多工具" className="mt-[17px] mb-4">
                <svg width="16" height="5" viewBox="0 0 16 5" fill="none" stroke="currentColor" aria-hidden="true">
                    <circle cx="2" cy="2.500" r="1.500" />
                    <circle cx="8" cy="2.500" r="1.500" />
                    <circle cx="14" cy="2.500" r="1.500" />
                </svg>
            </button>
        </aside>
    );
}

function StatusBar() {
    return (
        <footer className="flex h-7 shrink-0 items-center border-t border-[#dfe2e8] pl-4">
            <Icon>
                <circle cx="4" cy="4" r="3" />
                <circle cx="4" cy="4" r="1" />
                <path d="M8 2.600h7.400V6M13.400 2.600v11.800H2V11h9v3.400" />
            </Icon>
            <span className="mr-2.5 ml-[15px] h-3.5 w-px bg-[#d6d9df]" />
            <span className="flex gap-2.5">
                <span>平均值=5880.4</span>
                <span>计数=20</span>
                <span>求和=2万9402</span>
            </span>
            <div className="ml-auto flex items-center pr-[15px]">
                <button type="button" aria-label="护眼模式" className="flex size-6 items-center justify-center rounded-sm bg-[#dce1e7]">
                    <Icon>
                        <ellipse cx="8" cy="10.500" rx="7" ry="4.800" />
                        <circle cx="8" cy="10.500" r="3.500" />
                        <circle cx="8" cy="10.500" r="1.400" />
                        <path d="M8 .5v3M2.500 1.500l1.500 2M13.500 1.500l-1.500 2" />
                    </Icon>
                </button>
                <button type="button" aria-label="阅读模式" className="ml-[3px] flex items-center gap-1">
                    <Icon><path d="M5.500.6h5v14.800h-5zM.6 5.500h14.800v5H.6z" /></Icon>
                    <Caret />
                </button>
                <span className="mx-3 h-3.5 w-px bg-[#d6d9df]" />
                <button type="button" aria-label="普通视图" className="flex size-6 items-center justify-center rounded-sm bg-[#dce1e7]">
                    <Icon><path d="M.6 1.600h14.800v12.800H.6zM.6 5.800h14.800M.6 10.200h14.800M5.500 1.600v12.800M10.500 1.600v12.800" /></Icon>
                </button>
                <button type="button" aria-label="页面布局视图" className="ml-1.5">
                    <Icon><path d="M.6.6h14.800v14.800H.6zM3.500 3.500h9v9h-9zM8 3.500v9" /></Icon>
                </button>
                <button type="button" aria-label="分页预览" className="ml-2.5">
                    <Icon><path d="M.6 1.600h14.800v12.800H.6zM.6 9h10V1.600M5.500 1.600V9" /></Icon>
                </button>
                <span className="mr-[11px] ml-3.5 h-3.5 w-px bg-[#d6d9df]" />
                <button type="button" className="flex items-center gap-1">
                    100%
                    <Caret />
                </button>
                <button type="button" aria-label="缩小显示" className="ml-3">
                    <Icon size={10}><path d="M0 5h10" strokeWidth="2" /></Icon>
                </button>
                <input
                    type="range"
                    aria-label="显示比例"
                    defaultValue={49}
                    className="mx-3 h-3 w-[140px] appearance-none bg-[linear-gradient(90deg,#3e4a61_46%,#d6d9df_46%)] bg-[length:100%_1px] bg-center bg-no-repeat [&::-webkit-slider-thumb]:size-3 [&::-webkit-slider-thumb]:appearance-none [&::-webkit-slider-thumb]:rounded-full [&::-webkit-slider-thumb]:border [&::-webkit-slider-thumb]:border-[#3e4a61] [&::-webkit-slider-thumb]:bg-[#f6f8fa]"
                />
                <button type="button" aria-label="放大显示" className="mr-[13px]">
                    <Icon size={10}><path d="M0 5h10M5 0v10" strokeWidth="1.800" /></Icon>
                </button>
                <button type="button" aria-label="全屏显示">
                    <Icon size={14}><path d="M.6 4.500V.6h3.900M9.500.6h3.900v3.900M13.400 9.500v3.900H9.500M4.500 13.400H.6V9.500M.6.6L5 5M13.400.6L9 5M13.400 13.400L9 9M.6 13.400L5 9" /></Icon>
                </button>
            </div>
        </footer>
    );
}

function SiteMark() {
    return (
        <div className="pointer-events-none absolute right-[5px] bottom-2 z-20 flex items-center opacity-90">
            <svg width="46" height="42" viewBox="0 0 46 42" aria-hidden="true">
                <defs>
                    <linearGradient id="wing" x1="0" y1="1" x2="1" y2="0">
                        <stop offset="0" stopColor="#3f74d0" />
                        <stop offset="1" stopColor="#5fc8ef" />
                    </linearGradient>
                    <linearGradient id="leaf" x1="0" y1="1" x2="1" y2="0">
                        <stop offset="0" stopColor="#e9df4a" />
                        <stop offset="1" stopColor="#4cb86a" />
                    </linearGradient>
                </defs>
                <path d="M45 2C26-1 3 8 2 23c0 5 3 8 8 9-3-8 1-19 35-30z" fill="url(#wing)" />
                <path d="M33 13c-13-1-22 8-18 16 5 3 13-1 11-8-5-1-8 2-7 5 1 1 3 1 4-1 0 3-5 3-5 0-1-5 6-10 15-12z" fill="#4a8ed8" />
                <path d="M29 17c8-4 15 0 13 7-3 10-20 15-37 16 15-3 24-7 27-13 2-5 0-8-3-10z" fill="url(#leaf)" />
            </svg>
            <div className="flex flex-col whitespace-nowrap">
                <span className="text-[21px] leading-6 font-bold text-[#5599da]">极光下载站</span>
                <span className="font-['Liberation_Sans',sans-serif] text-[17px] leading-5 font-bold text-[#54bf74]">www.xz7.com</span>
            </div>
        </div>
    );
}

function LevelMeter() {
    return (
        <div className="pointer-events-none absolute right-0 bottom-[127px] flex h-[59px] w-2.5 flex-col items-end justify-center rounded-l-sm border border-r-0 border-[#363c48] bg-[#545c6b] pr-0.5">
            <span className="h-3 w-1 bg-[repeating-linear-gradient(#2d323c_0_1px,transparent_1px_2px)]" />
            <span className="h-3 w-1 bg-[repeating-linear-gradient(#efc75c_0_1px,transparent_1px_2px)]" />
            <span className="h-2.5 w-1 bg-[repeating-linear-gradient(#b9da72_0_1px,transparent_1px_2px)]" />
            <span className="h-3 w-1 bg-[repeating-linear-gradient(#66dfc4_0_1px,transparent_1px_2px)]" />
        </div>
    );
}

export default function App() {
    return (
        <div className="relative flex h-screen flex-col overflow-hidden bg-[#f6f8fa] font-['Open_Sans','Noto_Sans_CJK_SC',sans-serif] text-xs text-[#262c3a]">
            <TitleBar />
            <MenuBar />
            <Ribbon />
            <div className="flex min-h-0 flex-1">
                <main className="flex min-w-0 flex-1 flex-col">
                    <FormulaBar />
                    <div className="flex min-h-0 flex-1">
                        <Grid />
                        <VerticalScroll />
                    </div>
                    <SheetBar />
                </main>
                <SelectionPane />
                <SideBar />
            </div>
            <StatusBar />
            <SiteMark />
            <LevelMeter />
        </div>
    );
}
